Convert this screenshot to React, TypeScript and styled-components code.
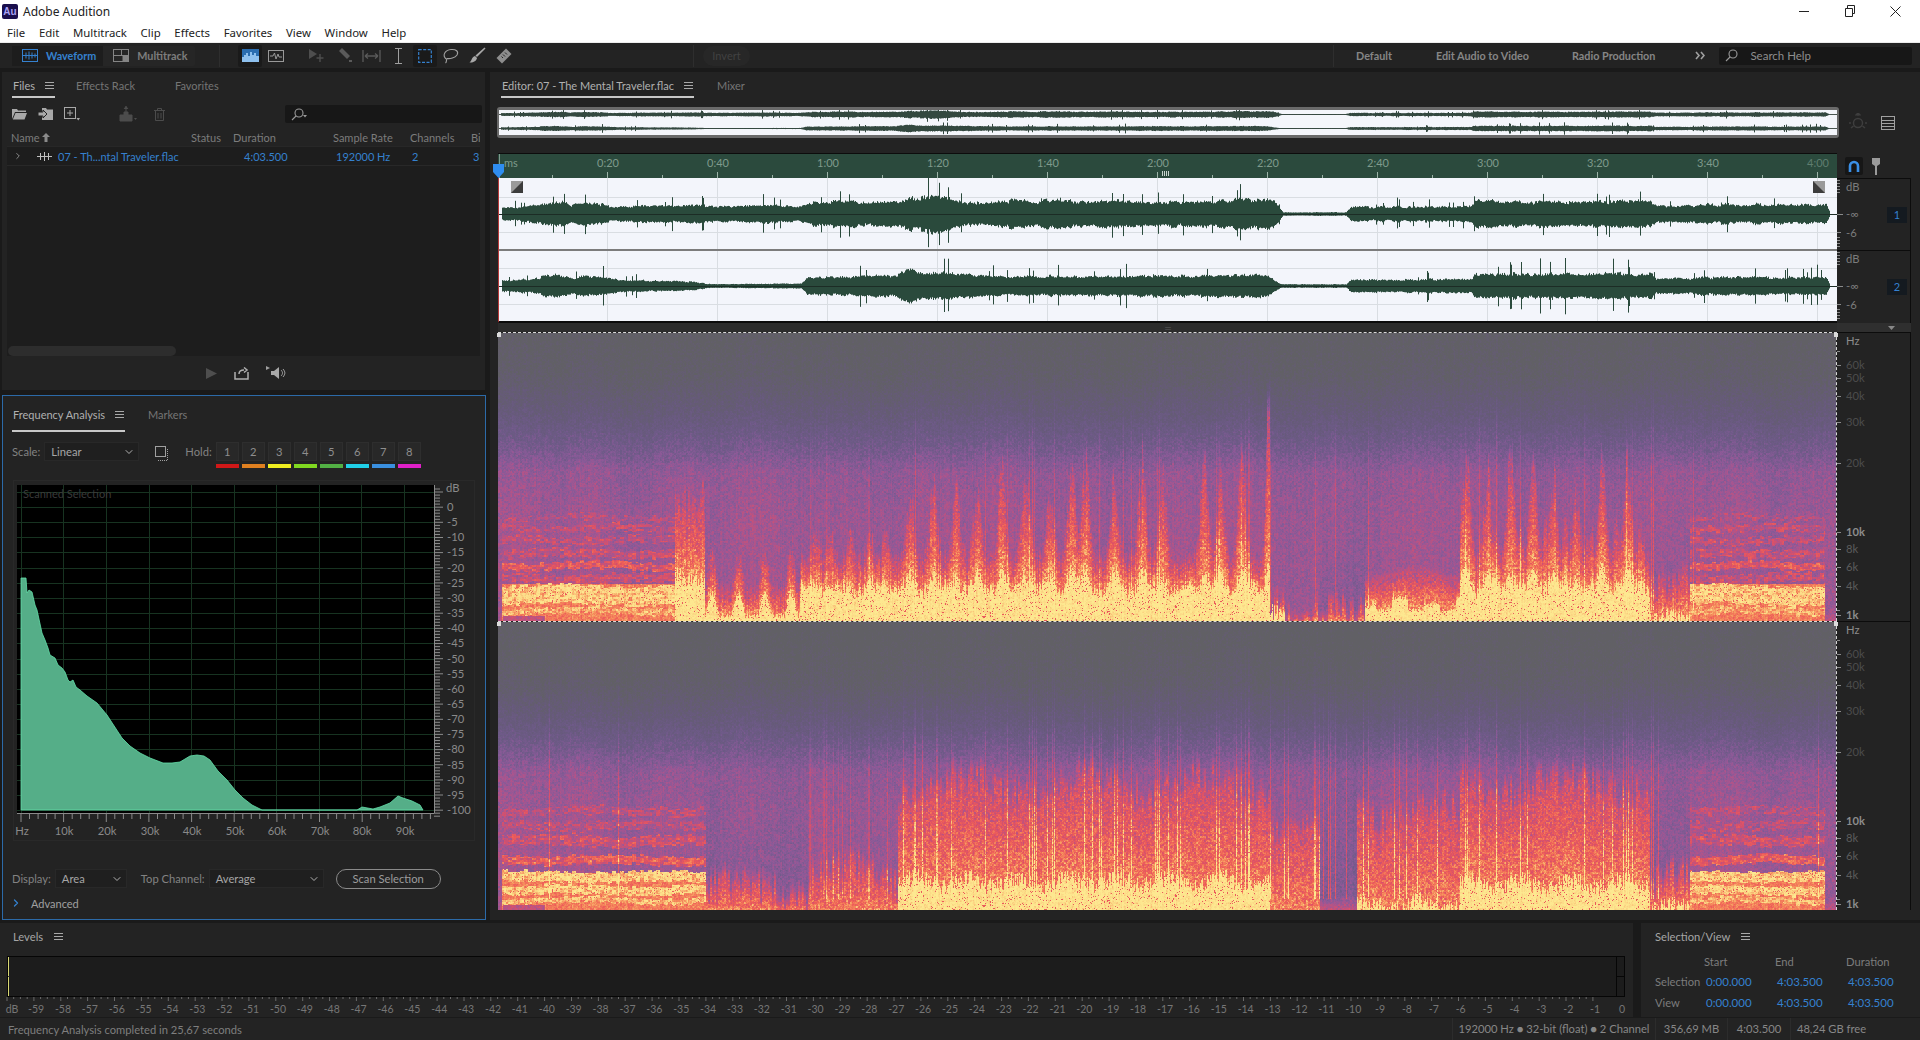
import React, { useEffect, useMemo, useRef } from "react";
import styled, { createGlobalStyle } from "styled-components";
import { ChevronDown, ChevronRight } from "lucide-react";

const GlobalStyle = createGlobalStyle`
  html, body {
    margin: 0;
    padding: 0;
    background: #1a1a1a;
  }
  * {
    box-sizing: border-box;
  }
`;

const UI_FONT = `Lato, "Liberation Sans", sans-serif`;
const WIN_FONT = `"Noto Sans", "Liberation Sans", sans-serif`;
const BLUE = "#3581cf";

const Page = styled.div`
  width: 1920px;
  height: 1040px;
  overflow: hidden;
  display: flex;
  flex-direction: column;
  background: #1a1a1a;
  font-family: ${UI_FONT};
  font-size: 11.2px;
  color: #9a9a9a;
`;

const TitleBar = styled.div`
  height: 22px;
  background: #fff;
  display: flex;
  align-items: center;
  padding-left: 2px;
  font-family: ${WIN_FONT};
  font-size: 12px;
  color: #222;
`;

const Logo = styled.div`
  width: 16px;
  height: 15px;
  background: #1a0f4d;
  border-radius: 2px;
  color: #a9a2f5;
  font-family: "Liberation Sans", sans-serif;
  font-weight: 700;
  font-size: 10px;
  line-height: 15px;
  text-align: center;
  margin-right: 5px;
`;

const WindowButtons = styled.div`
  margin-left: auto;
  display: flex;
  padding-right: 1px;
  color: #222;
`;

const WindowButton = styled.div`
  width: 45px;
  height: 22px;
  display: flex;
  align-items: center;
  justify-content: center;
  margin-right: 1px;
`;

const MenuBar = styled.div`
  height: 21px;
  background: #fff;
  display: flex;
  align-items: center;
  gap: 13.7px;
  padding-left: 7px;
  font-family: ${WIN_FONT};
  font-size: 11.4px;
  color: #222;
  border-bottom: 1px solid #ececec;
`;

const Toolbar = styled.div`
  height: 25px;
  background: #232323;
  display: flex;
  align-items: center;
  padding-left: 12px;
`;

const ModeSwitch = styled.div`
  width: 183px;
  height: 20px;
  background: #262626;
  border-radius: 2px;
  display: flex;
  align-items: center;
`;

const ModeButton = styled.div<{ $active?: boolean }>`
  height: 20px;
  display: flex;
  align-items: center;
  gap: 8px;
  padding: 0 7px 0 10px;
  font-weight: 700;
  font-size: 10.8px;
  background: ${(p) => (p.$active ? "#1d1d1d" : "transparent")};
  color: ${(p) => (p.$active ? BLUE : "#7d7d7d")};
`;

const ToolButton = styled.div<{ $ml?: number; $active?: boolean; $color?: string }>`
  width: 24px;
  height: 22px;
  margin-left: ${(p) => p.$ml ?? 0}px;
  display: flex;
  align-items: center;
  justify-content: center;
  border-radius: 2px;
  background: ${(p) => (p.$active ? "#1a1a1a" : "transparent")};
  color: ${(p) => p.$color ?? "#8c8c8c"};
`;

const ToolSep = styled.div<{ $ml: number }>`
  width: 1px;
  height: 22px;
  margin-left: ${(p) => p.$ml}px;
  background: #2e2e2e;
`;

const InvertPill = styled.div`
  width: 47px;
  height: 20px;
  margin-left: 9px;
  border-radius: 10px;
  background: #272727;
  color: #414141;
  text-align: center;
  font-size: 11px;
  line-height: 20px;
`;

const WorkspaceLink = styled.div<{ $ml: number }>`
  margin-left: ${(p) => p.$ml}px;
  color: #868686;
  font-weight: 700;
  font-size: 10.8px;
`;

const SearchBox = styled.div`
  width: 193px;
  height: 18px;
  margin-left: 14px;
  background: #171717;
  border-radius: 2px;
  display: flex;
  align-items: center;
  gap: 12px;
  padding-left: 6px;
  color: #8e8e8e;
  font-size: 11.5px;
`;

const ToolbarGap = styled.div`
  height: 4px;
  background: #1a1a1a;
`;

const Workspace = styled.div`
  height: 848px;
  display: flex;
`;

const LeftColumn = styled.div`
  width: 490px;
  padding: 0 4px 0 2px;
  display: flex;
  flex-direction: column;
  gap: 5px;
`;

const FilesPanel = styled.div`
  height: 318px;
  width: 483px;
  background: #232323;
  display: flex;
  flex-direction: column;
`;

const TabBar = styled.div<{ $pl: number }>`
  height: 28px;
  flex-shrink: 0;
  display: flex;
  padding-left: ${(p) => p.$pl}px;
`;

const Tab = styled.div<{ $active?: boolean; $mr?: number; $tall?: boolean }>`
  height: ${(p) => (p.$tall ? 36 : 26)}px;
  display: flex;
  align-items: center;
  gap: 10px;
  padding: 3px 1px 0;
  margin-right: ${(p) => p.$mr ?? 22}px;
  font-size: 11px;
  color: ${(p) => (p.$active ? "#b0b0b0" : "#757575")};
  border-bottom: 2px solid ${(p) => (p.$active ? "#c8c8c8" : "transparent")};
`;

const FileTools = styled.div`
  height: 28px;
  display: flex;
  align-items: center;
  padding-left: 5px;
`;

const FileSearch = styled.div`
  width: 197px;
  height: 18px;
  margin-left: 114px;
  background: #171717;
  border-radius: 2px;
  display: flex;
  align-items: center;
  padding-left: 6px;
  color: #999;
`;

const FileColumns = styled.div`
  display: grid;
  grid-template-columns: 184px 42px 100px 77px 61px 1fr;
  width: 473px;
  margin-left: 5px;
  align-items: center;
  overflow: hidden;
  white-space: nowrap;
`;

const HeaderRow = styled(FileColumns)`
  height: 18px;
  color: #7c7c7c;
  font-size: 11px;
  padding-top: 1px;
`;

const NameHead = styled.div`
  padding-left: 4px;
  display: flex;
  align-items: center;
  gap: 2px;
`;

const FileList = styled.div`
  width: 473px;
  margin-left: 5px;
  height: 210px;
  background: #1d1d1d;
  border-top: 1px solid #272727;
  position: relative;
`;

const FileRow = styled(FileColumns)`
  margin-left: 0;
  height: 19px;
  border-bottom: 1px solid #282828;
  color: ${BLUE};
  font-size: 11px;
`;

const FileName = styled.div`
  display: flex;
  align-items: center;
  padding-left: 6px;
  color: ${BLUE};
`;

const FileGlyph = styled.svg`
  margin: 0 6px 0 14px;
`;

const DurationCell = styled.div`
  padding-left: 11px;
`;

const SampleCell = styled.div`
  padding-left: 3px;
`;

const ChannelCell = styled.div`
  padding-left: 2px;
`;

const ScrollThumb = styled.div`
  position: absolute;
  left: 1px;
  bottom: 0;
  width: 168px;
  height: 10px;
  background: #2d2d2d;
  border-radius: 5px;
`;

const Transport = styled.div`
  flex: 1;
  display: flex;
  align-items: center;
  justify-content: center;
  gap: 17px;
  margin-left: 5px;
`;

const FreqPanel = styled.div`
  width: 484px;
  height: 525px;
  background: #232323;
  border: 1px solid #2c6aa8;
  display: flex;
  flex-direction: column;
`;

const ScaleRow = styled.div`
  height: 19px;
  margin-top: 18px;
  padding-left: 9px;
  display: flex;
  align-items: flex-start;
`;

const FieldLabel = styled.div<{ $ml?: number }>`
  margin-left: ${(p) => p.$ml ?? 0}px;
  height: 19px;
  line-height: 20px;
  color: #828282;
  font-size: 11.2px;
  white-space: nowrap;
`;

const Select = styled.div<{ $w: number; $ml?: number }>`
  width: ${(p) => p.$w}px;
  height: 19px;
  margin-left: ${(p) => p.$ml ?? 4}px;
  padding: 0 3px 0 6px;
  display: flex;
  align-items: center;
  justify-content: space-between;
  background: #1f1f1f;
  border: 1px solid #282828;
  color: #a6a6a6;
  font-size: 11.2px;
`;

const HoldGroup = styled.div`
  display: flex;
  gap: 3px;
  margin-left: 4px;
`;

const HoldSlot = styled.div`
  width: 23px;
  display: flex;
  flex-direction: column;
  gap: 3px;
`;

const HoldButton = styled.div`
  height: 19px;
  background: #282828;
  border: 1px solid #2e2e2e;
  color: #8e8e8e;
  text-align: center;
  line-height: 17px;
  font-size: 11.2px;
`;

const HoldColor = styled.div<{ $c: string }>`
  height: 4px;
  background: ${(p) => p.$c};
`;

const ChartFrame = styled.div`
  width: 462px;
  height: 361px;
  margin: 19px 0 0 10px;
  border: 1px solid #292929;
`;

const ChartSvg = styled.svg`
  display: block;
`;

const DisplayRow = styled.div`
  margin-top: 28px;
  height: 19px;
  padding-left: 9px;
  display: flex;
`;

const ScanButton = styled.div`
  width: 105px;
  height: 20px;
  margin-left: 12px;
  border: 1px solid #8a8a8a;
  border-radius: 10px;
  text-align: center;
  line-height: 17px;
  color: #9c9c9c;
  font-size: 11.2px;
`;

const AdvancedRow = styled.div`
  margin-top: 6px;
  height: 18px;
  padding-left: 7px;
  display: flex;
  align-items: center;
  gap: 9px;
  color: #a0a0a0;
  font-size: 11px;
`;

const EditorPanel = styled.div`
  flex: 1;
  background: #232323;
  padding-left: 8px;
  height: 848px;
`;

const OverviewRow = styled.div`
  height: 46px;
  margin-top: 7px;
  display: flex;
  align-items: flex-start;
`;

const OverviewFrame = styled.div`
  width: 1342px;
  height: 31px;
  margin-left: -1px;
  background: #f4f6fb;
  border: solid #6a6a6a;
  border-width: 3px 2px;
  border-radius: 3px;
`;

const OverviewTools = styled.div`
  height: 31px;
  display: flex;
  align-items: center;
  gap: 13px;
  padding-left: 9px;
`;

const TrackGrid = styled.div`
  display: grid;
  grid-template-columns: 1339px 74px;
`;

const RulerCell = styled.div`
  height: 25px;
  border-top: 1px solid #0c0c0c;
  position: relative;
`;

const RulerSvg = styled.svg`
  display: block;
  background: #2b4a3d;
`;

const Playhead = styled.svg`
  position: absolute;
  left: -5px;
  top: 10px;
`;

const RulerTools = styled.div`
  display: flex;
  align-items: center;
  gap: 9px;
  padding: 1px 0 0 8px;
`;

const MagnetButton = styled.div`
  width: 18px;
  height: 18px;
  background: #161616;
  border-radius: 2px;
  display: flex;
  align-items: center;
  justify-content: center;
`;

const WaveCell = styled.div`
  height: 145px;
  position: relative;
  background: #f3f5fb;
  border-left: 1px solid #b83a3a;
  border-bottom: 2px solid #0c0c0c;
`;

const WaveSvg = styled.svg`
  display: block;
`;

const FadeHandle = styled.svg<{ $side: "left" | "right" }>`
  position: absolute;
  top: 3px;
  ${(p) => (p.$side === "left" ? "left: 12px;" : "right: 12px;")}
`;

const AxisCell = styled.div`
  position: relative;
  border-top: 1px solid #0c0c0c;
  border-right: 1px solid #0c0c0c;
`;

const ChannelBadge = styled.div<{ $top: number }>`
  position: absolute;
  right: 3px;
  top: ${(p) => p.$top}px;
  width: 20px;
  height: 16px;
  background: #141a20;
  color: ${BLUE};
  text-align: center;
  line-height: 16px;
  font-size: 11px;
`;

const SplitStrip = styled.div`
  height: 9px;
  background: #2c2c2c;
  display: flex;
  align-items: center;
  justify-content: center;
  color: #555;
  font-size: 6px;
  letter-spacing: -1px;
`;

const StripEnd = styled.div`
  height: 9px;
  background: #2f2f2f;
  display: flex;
  align-items: center;
  justify-content: flex-end;
  padding-right: 16px;
`;

const SpecPane = styled.div`
  height: 289px;
  position: relative;
  border-top: 1px dashed #d8d8d8;
  border-right: 1px dashed #d8d8d8;
`;

const SpecCanvas = styled.canvas`
  display: block;
`;

const Handle = styled.div<{ $right?: boolean }>`
  position: absolute;
  top: 0;
  ${(p) => (p.$right ? "right: -2px;" : "left: -1px;")}
  width: 4px;
  height: 4px;
  background: #dcdcdc;
`;

const SpecAxis = styled.div`
  border-top: 1px solid #0c0c0c;
  border-right: 1px solid #0c0c0c;
`;

const BottomRow = styled.div`
  height: 94px;
  margin-top: 3px;
  display: flex;
  gap: 8px;
`;

const LevelsPanel = styled.div`
  width: 1633px;
  background: #232323;
`;

const PanelHead = styled.div<{ $pl: number }>`
  height: 33px;
  padding: 0 0 6px ${(p) => p.$pl}px;
  display: flex;
  align-items: center;
  gap: 11px;
  color: #a6a6a6;
  font-size: 11.2px;
`;

const SelectionPanel = styled.div`
  flex: 1;
  background: #232323;
`;

const SelectionTable = styled.div`
  display: grid;
  grid-template-columns: 51px 71px 71px 1fr;
  grid-auto-rows: 20.5px;
  padding-left: 14px;
  margin-top: -5px;
  align-items: center;
  font-size: 11.2px;
  color: #7c7c7c;
`;

const SelValue = styled.div`
  color: ${BLUE};
  font-size: 11.5px;
`;

const SelHead = styled.div`
  margin-left: -2px;
`;

const StatusBar = styled.div`
  height: 22px;
  background: #232323;
  margin-top: 1px;
  display: flex;
  align-items: center;
  padding-left: 8px;
  color: #7e7e7e;
  font-size: 11.2px;
`;

const StatusCell = styled.div<{ $w: number }>`
  width: ${(p) => p.$w}px;
  text-align: center;
  border-left: 1px solid #2c2c2c;
  height: 22px;
  line-height: 22px;
  color: #878787;
  white-space: nowrap;
`;

const StatusCells = styled.div`
  margin-left: auto;
  display: flex;
  margin-right: 48px;
`;

// helpers --------------------------------------------------------------
const hash = (x: number, y: number) => {
  const n = Math.sin(x * 127.1 + y * 311.7) * 43758.5453;
  return n - Math.floor(n);
};

const pw = (pts: number[][], x: number) => {
  if (x <= pts[0][0]) return pts[0][1];
  for (let i = 1; i < pts.length; i++) {
    if (x <= pts[i][0]) {
      const t = (x - pts[i - 1][0]) / (pts[i][0] - pts[i - 1][0]);
      return pts[i - 1][1] + (pts[i][1] - pts[i - 1][1]) * t;
    }
  }
  return pts[pts.length - 1][1];
};

// waveform envelopes, x in page pixels, half height in pixels
const ENV = [
  [[501, 7], [530, 9], [555, 15], [570, 10], [583, 16], [610, 8], [650, 10], [700, 10], [730, 9], [760, 10], [800, 9], [815, 15], [900, 15], [930, 22], [980, 12], [1000, 16], [1100, 16], [1180, 14], [1250, 18], [1272, 17], [1282, 2], [1345, 2], [1350, 8], [1470, 9], [1475, 15], [1650, 15], [1655, 10], [1690, 10], [1695, 11], [1825, 11], [1829, 1]],
  [[501, 6], [530, 8], [555, 14], [570, 9], [583, 12], [620, 7], [690, 5], [710, 2], [800, 3], [806, 10], [895, 12], [900, 18], [960, 14], [1000, 11], [1200, 12], [1265, 13], [1280, 2], [1345, 2], [1350, 7], [1470, 8], [1475, 14], [1650, 14], [1655, 9], [1690, 9], [1695, 10], [1825, 10], [1829, 1]],
];

const wavePath = (ch: number, cy: number, scale: number, x0: number) => {
  let d = "";
  for (let x = 501; x < 1829; x++) {
    const a = pw(ENV[ch], x);
    const r = hash(x, ch + 1);
    const spike = r > 0.965 && a > 6 ? 1.5 + hash(x, 9) * (ch === 1 ? 0.9 : 0.45) : 1;
    // uneven lumps so the outline is not a flat band
    const lump = ch === 0 ? 0.74 + hash(x >> 3, 31) * 0.2 + hash(x >> 1, 33) * 0.12 : 0.82 + hash(x >> 2, 35) * 0.2;
    const up = a * lump * (0.82 + hash(x, 3 + ch) * 0.18) * spike * scale;
    const dn = a * lump * (0.82 + hash(x, 5 + ch) * 0.18) * spike * scale;
    d += `M${x - x0 + 0.5} ${(cy - up).toFixed(1)}V${(cy + dn).toFixed(1)}`;
  }
  return d;
};

// spectrogram model --------------------------------------------------
const PALETTE: [number, number, number, number][] = [
  [0, 0x61, 0x60, 0x65],
  [0.18, 0x66, 0x5a, 0x7a],
  [0.3, 0x6e, 0x5a, 0x88],
  [0.42, 0x8a, 0x5a, 0x98],
  [0.5, 0xa8, 0x55, 0x8f],
  [0.62, 0xd8, 0x50, 0x6a],
  [0.72, 0xee, 0x5e, 0x58],
  [0.82, 0xf5, 0x8e, 0x5c],
  [0.92, 0xfb, 0xd6, 0x84],
  [1, 0xfd, 0xe8, 0x90],
];

const paletteAt = (e: number) => {
  const v = Math.max(0, Math.min(1, e));
  for (let i = 1; i < PALETTE.length; i++) {
    if (v <= PALETTE[i][0]) {
      const a = PALETTE[i - 1];
      const b = PALETTE[i];
      const t = (v - a[0]) / (b[0] - a[0]);
      return [a[1] + (b[1] - a[1]) * t, a[2] + (b[2] - a[2]) * t, a[3] + (b[3] - a[3]) * t];
    }
  }
  return [0xfd, 0xe8, 0x90];
};

type Seg = { to: number; hc: number; hr: number; kind?: "stripe" | "flame" | "dark" | "low" | "bumps" };

const SEGS: Seg[][] = [
  [
    { to: 502, hc: 0, hr: 0 },
    { to: 675, hc: 0, hr: 0, kind: "stripe" },
    { to: 705, hc: 0.16, hr: 0.44 },
    { to: 800, hc: 0.02, hr: 0.1, kind: "bumps" },
    { to: 1270, hc: 0.11, hr: 0.2, kind: "flame" },
    { to: 1285, hc: 0.02, hr: 0.08 },
    { to: 1320, hc: 0, hr: 0.02 },
    { to: 1365, hc: 0, hr: 0.01, kind: "dark" },
    { to: 1460, hc: 0.07, hr: 0.15, kind: "low" },
    { to: 1650, hc: 0.11, hr: 0.2, kind: "flame" },
    { to: 1690, hc: 0.01, hr: 0.14, kind: "dark" },
    { to: 1825, hc: 0, hr: 0, kind: "stripe" },
    { to: 1840, hc: 0, hr: 0 },
  ],
  [
    { to: 502, hc: 0, hr: 0 },
    { to: 706, hc: 0, hr: 0, kind: "stripe" },
    { to: 808, hc: 0, hr: 0.07, kind: "dark" },
    { to: 898, hc: 0, hr: 0.12 },
    { to: 1270, hc: 0.1, hr: 0.42 },
    { to: 1320, hc: 0, hr: 0.28 },
    { to: 1357, hc: 0, hr: 0, kind: "dark" },
    { to: 1460, hc: 0.02, hr: 0.33 },
    { to: 1650, hc: 0.09, hr: 0.42 },
    { to: 1690, hc: 0.01, hr: 0.1, kind: "dark" },
    { to: 1825, hc: 0, hr: 0, kind: "stripe" },
    { to: 1840, hc: 0, hr: 0 },
  ],
];

const BANDS: number[][][] = [
  [[0.025, 0.05, 0.93], [0.06, 0.125, 0.98], [0.135, 0.165, 0.68], [0.18, 0.205, 0.76], [0.22, 0.25, 0.68], [0.27, 0.295, 0.66], [0.31, 0.335, 0.66], [0.35, 0.37, 0.62]],
  [[0.025, 0.045, 0.95], [0.055, 0.085, 0.98], [0.1, 0.135, 0.98], [0.16, 0.19, 0.78], [0.225, 0.26, 0.7], [0.28, 0.31, 0.64], [0.33, 0.36, 0.64]],
];

const PEAKS = [678, 692, 910, 933, 956, 977, 1002, 1025, 1050, 1071, 1085, 1114, 1142, 1162, 1204, 1220, 1241, 1466, 1487, 1510, 1533, 1553, 1576, 1602, 1627];
const SMALL_PEAKS = [815, 830, 850, 870, 885, 1495, 1520, 1545, 1565, 1590, 1615, 1640];

const peakAt = (x: number) => {
  let v = 0;
  for (const p of PEAKS) {
    const dx = (x - p) / 5.5;
    v = Math.max(v, Math.exp(-dx * dx) * (0.18 + hash(p, 2) * 0.15));
  }
  for (const p of SMALL_PEAKS) {
    const dx = (x - p) / 4;
    v = Math.max(v, Math.exp(-dx * dx) * 0.11);
  }
  const dx = (x - 1269) / 4.5;
  return Math.max(v, Math.exp(-dx * dx) * 0.5);
};

const BASE = [[0, 0.47], [0.35, 0.47], [0.52, 0.44], [0.62, 0.31], [0.72, 0.18], [0.85, 0.05], [1, 0]];

const energyAt = (ch: number, x: number, y: number, d: number) => {
  const seg = SEGS[ch].find((s) => x < s.to) ?? SEGS[ch][0];
  let base = pw(BASE, ch === 1 ? d * 1.08 : d);
  base += (Math.sin(x / 37) + Math.sin(x / 13 + ch)) * 0.012;
  if (seg.kind === "dark") base -= ch === 0 ? 0.05 * Math.max(0, 1 - d / 0.45) : 0.08 * Math.max(0, 1 - d / 0.65);
  let e = base;
  const colA = hash(x, 11 + ch);
  const colB = hash(x >> 1, 23 + ch);
  let inRed = false;
  if (seg.kind === "stripe") {
    for (const b of BANDS[ch]) {
      const wob = Math.sin(x / 23 + b[0] * 40) * 0.005 + (hash(x >> 2, b[0] * 31) - 0.5) * 0.012;
      if (d >= b[0] + wob && d <= b[1] + wob) {
        const drop = b[2] > 0.9 ? 0.14 : 0.22;
        e = Math.max(e, b[2] - hash(x >> 2, (y >> 1) + 3) * drop);
      }
    }
    if (d < 0.02 && x < 545 && x > 502) e = 0.56;
    else if (d < 0.13 && e < 0.6) e = 0.78;
  } else {
    let hc = seg.hc;
    let hr = seg.hr;
    if (seg.kind === "flame") {
      const p = peakAt(x);
      hr += p * (0.75 + colB * 0.5);
      hc += p * 0.2;
      hc += Math.sin(x / 5.5) * 0.012 + (colA - 0.5) * 0.05;
      hr += (colA - 0.5) * 0.05;
    } else if (seg.kind === "bumps") {
      const s = Math.max(0, Math.sin((x - 705) / 4.2));
      hc += s * 0.075 + (colA - 0.5) * 0.02;
      hr += s * 0.12 + (colA - 0.5) * 0.03;
    } else if (seg.kind === "low") {
      // cream blocks that step and break up, as in the quiet passage
      hc += Math.sin(x / 11) * 0.015 + (colA - 0.5) * 0.02;
      hr += Math.sin(x / 17) * 0.02;
      if (hash(x >> 4, 41) > 0.5) hc *= 0.55;
    } else if (hr > 0) {
      hc += hc > 0 ? (colA - 0.5) * 0.06 + Math.sin(x / 8) * 0.015 : 0;
      hr += (colB - 0.5) * 0.11 + Math.sin(x / 19 + ch) * 0.03;
    }
    hc = Math.max(0, hc);
    hr = Math.max(0, hr);
    if (d < hc) {
      e = 0.97;
    } else if (d < hr) {
      const t = (d - hc) / Math.max(0.001, hr - hc);
      e = ch === 1 ? 0.79 - 0.2 * t : 0.84 - 0.3 * t;
      inRed = true;
    } else {
      e = Math.max(base, 0.58 - (d - hr) * 3.6);
    }
  }
  // thin bright lines running up from the loud parts
  const lineP = ch === 1 ? (x > 790 && x < 1660 ? 0.9 : 0.995) : x > 800 && x < 1700 ? 0.965 : 0.998;
  if (hash(x, 7) > lineP && d > 0.04 && d < 0.9) {
    const boost = (ch === 1 ? 0.28 : 0.2) * (1 - d);
    e = x < 898 && x > 808 ? e + boost * 0.55 : e + boost;
  }
  const fine = hash(x >> 1, y >> 1) * 0.6 + hash(x, y) * 0.4;
  e += (fine - 0.5) * (inRed ? 0.3 : 0.17);
  e += (hash(x, 17) - 0.5) * 0.04;
  if (e > 0.88 && hash(x + 3, y + 5) < 0.06) e = 0.7;
  return e;
};

// drawings ------------------------------------------------------------
const Spectrogram = ({ channel }: { channel: number }) => {
  const ref = useRef<HTMLCanvasElement>(null);
  useEffect(() => {
    const c = ref.current;
    const ctx = c?.getContext("2d");
    if (!c || !ctx) return;
    const img = ctx.createImageData(c.width, c.height);
    for (let y = 0; y < c.height; y++) {
      const d = 1 - y / c.height;
      for (let x = 0; x < c.width; x++) {
        const [r, g, b] = paletteAt(energyAt(channel, x + 498, y, d));
        const i = (y * c.width + x) * 4;
        img.data[i] = r;
        img.data[i + 1] = g;
        img.data[i + 2] = b;
        img.data[i + 3] = 255;
      }
    }
    ctx.putImageData(img, 0, 0);
  }, [channel]);
  return <SpecCanvas ref={ref} width={1338} height={288} />;
};

const Lines = () => (
  <svg width="9" height="9" viewBox="0 0 9 9" stroke="#a8a8a8" strokeWidth="1">
    <path d="M0 1.500H9M0 4.500H9M0 7.500H9" />
  </svg>
);

const WaveGlyph = ({ color }: { color: string }) => (
  <svg width="16" height="13" viewBox="0 0 16 13" fill="none" stroke={color}>
    <rect x=".5" y=".5" width="15" height="12" />
    <path d="M.5 6.500H15.500M4 3.500V9.500M7 2.500V10.500M10 3.500V9.500M13 4.500V8.500" />
  </svg>
);

const MultiGlyph = () => (
  <svg width="16" height="13" viewBox="0 0 16 13" fill="none" stroke="#858585">
    <rect x=".5" y=".5" width="15" height="12" />
    <path d="M.5 6.500H15.500M8.500 .5V6.500" />
    <path d="M10 7h5.500v5.500H10z" fill="#858585" />
  </svg>
);

const ToolbarIcons = () => (
  <>
    <ToolSep $ml={24} />
    <ToolButton $ml={18} $active $color={BLUE}>
      <svg width="17" height="13" viewBox="0 0 17 13">
        <rect width="17" height="13" fill="#2a6db0" />
        <path d="M0 8H2V6H4V4H6V7H8V3H10V6H12V4H14V7H17V13H0Z" fill="#8ec0ee" />
      </svg>
    </ToolButton>
    <ToolButton $ml={2}>
      <svg width="16" height="12" viewBox="0 0 16 12" fill="none" stroke="#999">
        <rect x=".5" y=".5" width="15" height="11" />
        <path d="M2 6H5L6.500 3L8 9L10 4L11 7H14" />
      </svg>
    </ToolButton>
    <ToolButton $ml={17} $color="#4e4e4e">
      <svg width="18" height="15" viewBox="0 0 18 15" fill="currentColor">
        <path d="M1 1L9 6L1 11Z" />
        <path d="M12 6V14M8.500 10H15.500" stroke="currentColor" strokeWidth="1.400" />
      </svg>
    </ToolButton>
    <ToolButton $ml={4} $color="#5a5a5a">
      <svg width="16" height="17" viewBox="0 0 16 17" fill="currentColor">
        <path d="M5 1L13 9L10 12L2 4Z" />
        <path d="M12 13H15V15H12Z" />
      </svg>
    </ToolButton>
    <ToolButton $ml={2} $color="#5a5a5a">
      <svg width="19" height="14" viewBox="0 0 19 14" fill="none" stroke="currentColor" strokeWidth="1.300">
        <path d="M1 1V13M18 1V13M3 7H16M3 7L6 4.500M3 7L6 9.500M16 7L13 4.500M16 7L13 9.500" />
      </svg>
    </ToolButton>
    <ToolButton $ml={3}>
      <svg width="9" height="16" viewBox="0 0 9 16" fill="none" stroke="#a0a0a0">
        <path d="M1 .5H8M4.500 .5V15.500M1 15.500H8" />
      </svg>
    </ToolButton>
    <ToolButton $ml={3} $active $color={BLUE}>
      <svg width="14" height="14" viewBox="0 0 14 14" fill="none" stroke={BLUE} strokeWidth="1.200" strokeDasharray="3 1.500">
        <rect x=".7" y=".7" width="12.600" height="12.600" />
      </svg>
    </ToolButton>
    <ToolButton $ml={2}>
      <svg width="18" height="16" viewBox="0 0 18 16" fill="none" stroke="#a0a0a0" strokeWidth="1.100">
        <path d="M4 11C0 7 3 2 9 1.500C14 1 17 3.500 15 7C13 10 8 11 5 10.500C4 12 5 14 3.500 15" />
      </svg>
    </ToolButton>
    <ToolButton $ml={2}>
      <svg width="17" height="17" viewBox="0 0 17 17" fill="#a8a8a8">
        <path d="M15.500 .5L16.500 1.500L8 10L6.500 8.500Z" />
        <path d="M6 9L8 11C7.500 14 4 16 .5 15.500C3 14 2.500 10 6 9Z" />
      </svg>
    </ToolButton>
    <ToolButton $ml={3}>
      <svg width="18" height="17" viewBox="0 0 18 17" fill="#8d8d8d">
        <path d="M11 1.500L16.500 7L7 16.500L1.500 11Z" />
        <path d="M8 7.500L10 9.500M6.500 9.500L8 11M10 5.500L12 7.500" stroke="#222" />
      </svg>
    </ToolButton>
  </>
);

const SearchGlyph = ({ caret }: { caret?: boolean }) => (
  <svg width={caret ? 16 : 13} height="13" viewBox={caret ? "0 0 16 13" : "0 0 13 13"} fill="none" stroke="#9a9a9a" strokeWidth="1.100">
    <circle cx="8" cy="5" r="4" />
    <path d="M5 8L1 12" />
    {caret ? <path d="M12 7H16L14 9.500Z" fill="#9a9a9a" stroke="none" /> : null}
  </svg>
);

const FileToolIcons = () => (
  <>
    <ToolButton>
      <svg width="15" height="12" viewBox="0 0 15 12" fill="#a8a8a8">
        <path d="M0 1H5L6 2.500H14V4H3L0 11ZM3.500 5H15L12.500 11.500H.8Z" />
      </svg>
    </ToolButton>
    <ToolButton $ml={3}>
      <svg width="16" height="14" viewBox="0 0 16 14" fill="#a8a8a8">
        <path d="M4 1H8L9 2.500H15V13H4Z" />
        <path d="M0 5H5V3L9 7L5 11V9H0Z" stroke="#232323" />
      </svg>
    </ToolButton>
    <ToolButton $ml={2}>
      <svg width="17" height="15" viewBox="0 0 17 15" fill="none" stroke="#a8a8a8">
        <rect x=".5" y=".5" width="11" height="11" />
        <path d="M3 6H9M6 3V9" />
        <path d="M12.500 11H16L14.250 13.500Z" fill="#a8a8a8" stroke="none" />
      </svg>
    </ToolButton>
    <ToolButton $ml={32} $color="#4c4c4c">
      <svg width="18" height="16" viewBox="0 0 18 16" fill="currentColor">
        <path d="M1 9H5V6H9V9H13V15H1ZM7 0V6M5 3L7 .5L9 3" stroke="currentColor" />
        <path d="M15 12H18L16.500 14Z" />
      </svg>
    </ToolButton>
    <ToolButton $ml={7} $color="#4c4c4c">
      <svg width="11" height="13" viewBox="0 0 11 13" fill="none" stroke="currentColor">
        <path d="M0 2.500H11M3.500 2.500V.5H7.500V2.500M1.500 2.500V12.500H9.500V2.500M4 5V10.500M7 5V10.500" />
      </svg>
    </ToolButton>
  </>
);

const FREQ_AREA = [[21, 810], [21, 578], [26, 578], [27, 593], [29, 590], [32, 592], [35, 605], [37, 610], [42, 633], [45, 640], [48, 648], [50, 655], [55, 658], [58, 665], [62, 668], [65, 672], [68, 680], [70, 682], [73, 680], [76, 687], [80, 690], [87, 696], [97, 703], [107, 715], [122, 738], [130, 746], [140, 753], [150, 758], [163, 763], [172, 763], [180, 762], [190, 756], [197, 755], [204, 756], [210, 760], [218, 771], [227, 780], [235, 790], [243, 798], [252, 805], [262, 810], [357, 810], [362, 807], [373, 809], [380, 807], [390, 803], [398, 796], [403, 798], [412, 801], [420, 805], [423, 810]];
const FREQ_X = [21, 63, 106, 149, 191, 234, 276, 319, 361, 404];
const DB_LABELS = ["0", "-5", "-10", "-15", "-20", "-25", "-30", "-35", "-40", "-45", "-50", "-55", "-60", "-65", "-70", "-75", "-80", "-85", "-90", "-95", "-100"];

const FrequencyChart = () => {
  const ticksX = [];
  for (let i = 0; i <= 48; i++) ticksX.push(21 + i * 8.53);
  const ticksY = [];
  for (let i = 0; i <= 108; i++) ticksY.push(489 + i * 3.03);
  const areaD = FREQ_AREA.map((p, i) => `${i ? "L" : "M"}${p[0]} ${p[1]}`).join("") + "Z";
  return (
    <ChartSvg width="460" height="359" viewBox="14 481 460 359">
      <rect x="17" y="485" width="417" height="328" fill="#000" />
      <g stroke="#173321" strokeWidth="1">
        {FREQ_X.map((x) => (
          <path key={x} d={`M${x + 0.5} 485V813`} />
        ))}
        {DB_LABELS.map((_, i) => (
          <path key={i} d={`M17 ${Math.round(507 + i * 15.15) + 0.5}H434`} />
        ))}
        <path d="M17 492.500H434" />
      </g>
      <path d={areaD} fill="#55ae88" />
      <path d={areaD} fill="none" stroke="#62dfa9" strokeWidth="0.800" />
      <path d="M17 813.500H434M434.500 485V813" stroke="#8a8a8a" />
      <g stroke="#8a8a8a">
        {ticksX.map((x, i) => (
          <path key={i} d={`M${x.toFixed(1)} 813V${i % 5 === 0 ? 822 : 819}`} />
        ))}
        {ticksY.map((y, i) => {
          const major = (i - 6) % 5 === 0;
          return <path key={i} d={`M434 ${y.toFixed(1)}H${major ? 443 : 440}`} />;
        })}
      </g>
      <text x="23" y="498" fill="#3a3a3a" fontSize="11">Scanned Selection</text>
      <g fill="#8a8a8a" fontSize="11.200">
        <text x="446" y="492">dB</text>
        {DB_LABELS.map((l, i) => (
          <text key={l} x="447" y={511 + i * 15.15}>
            {l}
          </text>
        ))}
        {["Hz", "10k", "20k", "30k", "40k", "50k", "60k", "70k", "80k", "90k"].map((l, i) => (
          <text key={l} x={FREQ_X[i] + 1} y="835" textAnchor="middle">
            {l}
          </text>
        ))}
      </g>
    </ChartSvg>
  );
};

const Ruler = () => {
  const labels = ["0:20", "0:40", "1:00", "1:20", "1:40", "2:00", "2:20", "2:40", "3:00", "3:20", "3:40", "4:00"];
  return (
    <RulerCell>
      <RulerSvg width="1339" height="24" viewBox="0 0 1339 24">
        <text x="6" y="13" fontSize="11" fill="#7f9a8c">ms</text>
        {labels.map((l, i) => (
          <g key={l}>
            <text x={110 * (i + 1)} y="13" fontSize="11" fill={i === 11 ? "#5f7d6f" : "#7f9a8c"} textAnchor="middle">
              {l}
            </text>
            <path d={`M${110 * (i + 1) - 0.5} 18V24`} stroke="#9db3a8" />
            <path d={`M${110 * (i + 1) - 55.5} 21V24`} stroke="#9db3a8" />
          </g>
        ))}
        <path d="M1.500 0V24" stroke="#7e9a8d" />
        <path d="M664.500 17V22M666.500 17V22M668.500 17V22M670.500 17V22" stroke="#c8d4ce" />
      </RulerSvg>
      <Playhead width="11" height="14" viewBox="0 0 11 14">
        <path d="M0 0H11V8L5.500 14L0 8Z" fill="#2f8df0" />
      </Playhead>
    </RulerCell>
  );
};

const WaveView = () => {
  const top = useMemo(() => wavePath(0, 36, 1, 498), []);
  const bottom = useMemo(() => wavePath(1, 108, 1, 498), []);
  const grid = [];
  for (let i = 1; i <= 12; i++) grid.push(110 * i - 1);
  return (
    <WaveSvg width="1338" height="143" viewBox="0 0 1338 143">
      <g stroke="#d9dde2">
        <path d="M0 19.500H1338M0 54.500H1338M0 90.500H1338M0 126.500H1338" />
        {grid.map((x) => (
          <path key={x} d={`M${x - 0.5} 0V143`} />
        ))}
      </g>
      <path d="M0 72H1338" stroke="#7c7c7c" strokeWidth="2" />
      <path d={top} stroke="#2a4a3c" strokeWidth="1" />
      <path d={bottom} stroke="#2a4a3c" strokeWidth="1" />
      <path d="M0 36.500H1338M0 108.500H1338" stroke="#1c2c25" strokeWidth="1" />
    </WaveSvg>
  );
};

const FadeGlyph = ({ side }: { side: "left" | "right" }) => (
  <FadeHandle $side={side} width="12" height="12" viewBox="0 0 12 12">
    <rect width="12" height="12" fill="#9a9a9a" />
    <path d={side === "left" ? "M12 0V12H0Z" : "M0 0V12H12Z"} fill="#3c3c3c" />
  </FadeHandle>
);

const Overview = () => {
  const top = useMemo(() => wavePath(0, 4.5, 0.22, 499), []);
  const bottom = useMemo(() => wavePath(1, 18.5, 0.22, 499), []);
  return (
    <WaveSvg width="1338" height="25" viewBox="0 0 1338 25">
      <path d="M0 4.500H1338M0 18.500H1338" stroke="#4a5650" />
      <path d={top} stroke="#33483f" />
      <path d={bottom} stroke="#33483f" />
    </WaveSvg>
  );
};

const DbAxis = () => (
  <WaveSvg width="73" height="144" viewBox="0 0 73 144">
    <path d="M0 71.500H73" stroke="#0c0c0c" />
    {[0, 72].map((o) => (
      <g key={o}>
        <text x="9" y={12 + o} fontSize="11.200" fill="#7c7c7c">dB</text>
        <text x="9" y={39 + o} fontSize="11.200" fill="#7c7c7c">-∞</text>
        <text x="9" y={58 + o} fontSize="11.200" fill="#7c7c7c">-6</text>
        <path
          d={`M0 ${35.5 + o}H6M0 ${53.5 + o}H4M0 ${1.5 + o}H3M0 ${4.5 + o}H3M0 ${7.5 + o}H3M0 ${10.5 + o}H3M0 ${13.5 + o}H3M0 ${58.5 + o}H3M0 ${61.5 + o}H3M0 ${64.5 + o}H3M0 ${67.5 + o}H3`}
          stroke="#8a8a8a"
        />
      </g>
    ))}
  </WaveSvg>
);

const HZ = [["Hz", 8], ["60k", 32], ["50k", 45], ["40k", 63], ["30k", 89], ["20k", 130], ["10k", 199], ["8k", 216], ["6k", 234], ["4k", 253], ["1k", 282]] as const;

const HzAxis = () => (
  <WaveSvg width="72" height="288" viewBox="0 0 72 288">
    {HZ.map(([l, y]) => (
      <g key={l}>
        <text
          x="9"
          y={y + 4}
          fontSize="11.200"
          fontWeight={l === "10k" || l === "1k" ? 700 : 400}
          fill={l === "Hz" || l === "10k" || l === "1k" ? "#8c8c8c" : l.length === 2 ? "#5c5c5c" : "#4c4c4c"}
        >
          {l}
        </text>
        {l === "Hz" ? null : <path d={`M0 ${y + 0.5}H4`} stroke="#8a8a8a" />}
      </g>
    ))}
    <path d="M0 18.500H3M0 277.500H3" stroke="#8a8a8a" />
  </WaveSvg>
);

const LevelsMeter = () => {
  const labels = [];
  for (let i = -59; i <= 0; i++) labels.push(i);
  const ticks = [];
  for (let i = 0; i <= 236; i++) ticks.push(7 + i * 6.72);
  return (
    <WaveSvg width="1633" height="61" viewBox="0 0 1633 61">
      <rect x="7.500" y=".5" width="1617" height="40" fill="#1c1c1c" stroke="#060606" />
      <path d="M8.500 1V40" stroke="#d8d874" />
      <path d="M1616.500 1V40M1616.500 20.500H1625" stroke="#060606" />
      <path d="M8 20.500H9.500" stroke="#333" />
      <g stroke="#6a6a6a">
        {ticks.map((x, i) => (
          <path key={i} d={`M${x.toFixed(1)} 41V${i % 4 === 0 ? 45 : 43}`} />
        ))}
      </g>
      <g fontSize="10.500" fill="#767676" textAnchor="middle">
        <text x="12" y="57">dB</text>
        {labels.map((n) => (
          <text key={n} x={1622 + n * 26.88} y="57">
            {n}
          </text>
        ))}
      </g>
    </WaveSvg>
  );
};

const HOLD = ["#d01818", "#e08020", "#f0ee20", "#80d820", "#52b044", "#20d0e8", "#3a90e0", "#e020c8"];
const MENUS = ["File", "Edit", "Multitrack", "Clip", "Effects", "Favorites", "View", "Window", "Help"];

function App() {
  return (
    <Page>
      <GlobalStyle />
      <TitleBar>
        <Logo>Au</Logo>
        Adobe Audition
        <WindowButtons>
          <WindowButton>
            <svg width="10" height="10" viewBox="0 0 10 10" stroke="#222"><path d="M0 5.500H10" /></svg>
          </WindowButton>
          <WindowButton>
            <svg width="10" height="12" viewBox="0 0 10 12" fill="none" stroke="#222"><path d="M.5 3.500H7.500V11.500H.5ZM2.500 3.500V.5H9.500V8.500H7.500" /></svg>
          </WindowButton>
          <WindowButton>
            <svg width="11" height="11" viewBox="0 0 11 11" stroke="#222"><path d="M.5 .5L10.500 10.500M10.500 .5L.5 10.500" /></svg>
          </WindowButton>
        </WindowButtons>
      </TitleBar>
      <MenuBar>
        {MENUS.map((m) => (
          <span key={m}>{m}</span>
        ))}
      </MenuBar>
      <Toolbar>
        <ModeSwitch>
          <ModeButton $active>
            <WaveGlyph color={BLUE} />
            Waveform
          </ModeButton>
          <ModeButton>
            <MultiGlyph />
            Multitrack
          </ModeButton>
        </ModeSwitch>
        <ToolbarIcons />
        <ToolSep $ml={177} />
        <InvertPill>Invert</InvertPill>
        <ToolSep $ml={583} />
        <WorkspaceLink $ml={22}>Default</WorkspaceLink>
        <WorkspaceLink $ml={44}>Edit Audio to Video</WorkspaceLink>
        <WorkspaceLink $ml={43}>Radio Production</WorkspaceLink>
        <WorkspaceLink $ml={40}>
          <svg width="10" height="9" viewBox="0 0 10 9" fill="none" stroke="#a0a0a0" strokeWidth="1.600"><path d="M1 1L4 4.500L1 8M6 1L9 4.500L6 8" /></svg>
        </WorkspaceLink>
        <SearchBox>
          <SearchGlyph />
          Search Help
        </SearchBox>
      </Toolbar>
      <ToolbarGap />
      <Workspace>
        <LeftColumn>
          <FilesPanel>
            <TabBar $pl={10}>
              <Tab $active $mr={20}>
                Files
                <Lines />
              </Tab>
              <Tab $mr={38}>Effects Rack</Tab>
              <Tab>Favorites</Tab>
            </TabBar>
            <FileTools>
              <FileToolIcons />
              <FileSearch>
                <SearchGlyph caret />
              </FileSearch>
            </FileTools>
            <HeaderRow>
              <NameHead>
                Name
                <svg width="8" height="9" viewBox="0 0 8 9" fill="#8a8a8a"><path d="M4 0L8 4H5.500V9H2.500V4H0Z" /></svg>
              </NameHead>
              <div>Status</div>
              <div>Duration</div>
              <div>Sample Rate</div>
              <div>Channels</div>
              <div>Bi</div>
            </HeaderRow>
            <FileList>
              <FileRow>
                <FileName>
                  <ChevronRight size={10} color="#a0a0a0" />
                  <FileGlyph width="15" height="9" viewBox="0 0 15 9" stroke="#c0c0c0">
                    <path d="M0 4.500H15M3.500 1V8M7.500 0V9M11.500 1V8" />
                  </FileGlyph>
                  07 - Th...ntal Traveler.flac
                </FileName>
                <div />
                <DurationCell>4:03.500</DurationCell>
                <SampleCell>192000 Hz</SampleCell>
                <ChannelCell>2</ChannelCell>
                <ChannelCell>3</ChannelCell>
              </FileRow>
              <ScrollThumb />
            </FileList>
            <Transport>
              <svg width="11" height="11" viewBox="0 0 11 11" fill="#4e4e4e"><path d="M0 0L11 5.500L0 11Z" /></svg>
              <svg width="15" height="13" viewBox="0 0 15 13" fill="none" stroke="#b0b0b0" strokeWidth="1.500"><path d="M1 5V12H14V5M5 7C5 4 7 3 10 3M10 .5L13 3L10 5.500" /></svg>
              <svg width="21" height="14" viewBox="0 0 21 14">
                <path d="M0 0L4 2L0 4Z" fill="#a0a0a0" />
                <path d="M5 5H8L13 1V13L8 9H5Z" fill="#a8a8a8" />
                <path d="M15 4C17 6 17 8 15 10M17 3C19.500 6 19.500 8 17 11" fill="none" stroke="#a0a0a0" />
              </svg>
            </Transport>
          </FilesPanel>
          <FreqPanel>
            <TabBar $pl={9}>
              <Tab $active $tall $mr={22}>
                Frequency Analysis
                <Lines />
              </Tab>
              <Tab $tall>Markers</Tab>
            </TabBar>
            <ScaleRow>
              <FieldLabel>Scale:</FieldLabel>
              <Select $w={95}>
                Linear
                <ChevronDown size={12} color="#b0b0b0" />
              </Select>
              <ToolButton $ml={11}>
                <svg width="15" height="15" viewBox="0 0 15 15" fill="none" stroke="#a0a0a0">
                  <rect x=".5" y=".5" width="10" height="10" />
                  <path d="M12.500 3V14.500H3" strokeDasharray="1 1" />
                </svg>
              </ToolButton>
              <FieldLabel $ml={11}>Hold:</FieldLabel>
              <HoldGroup>
                {HOLD.map((c, i) => (
                  <HoldSlot key={c}>
                    <HoldButton>{i + 1}</HoldButton>
                    <HoldColor $c={c} />
                  </HoldSlot>
                ))}
              </HoldGroup>
            </ScaleRow>
            <ChartFrame>
              <FrequencyChart />
            </ChartFrame>
            <DisplayRow>
              <FieldLabel>Display:</FieldLabel>
              <Select $w={72}>
                Area
                <ChevronDown size={12} color="#b0b0b0" />
              </Select>
              <FieldLabel $ml={14}>Top Channel:</FieldLabel>
              <Select $w={115}>
                Average
                <ChevronDown size={12} color="#b0b0b0" />
              </Select>
              <ScanButton>Scan Selection</ScanButton>
            </DisplayRow>
            <AdvancedRow>
              <ChevronRight size={12} color={BLUE} strokeWidth={2.5} />
              Advanced
            </AdvancedRow>
          </FreqPanel>
        </LeftColumn>
        <EditorPanel>
          <TabBar $pl={3}>
            <Tab $active $mr={22}>
              Editor: 07 - The Mental Traveler.flac
              <Lines />
            </Tab>
            <Tab>Mixer</Tab>
          </TabBar>
          <OverviewRow>
            <OverviewFrame>
              <Overview />
            </OverviewFrame>
            <OverviewTools>
              <svg width="20" height="20" viewBox="0 0 20 20" fill="none" stroke="#3e3e3e" strokeWidth="1.500">
                <circle cx="10" cy="10" r="4.500" />
                <path d="M10 0V3M7.500 2.500L10 0L12.500 2.500M3 15L5.500 13M14.500 13L17 15M1 10H3M17 10H19" />
              </svg>
              <svg width="14" height="14" viewBox="0 0 14 14" fill="none" stroke="#a0a0a0">
                <rect x=".5" y=".5" width="13" height="13" />
                <path d="M.5 4.500H13.500M.5 7.500H13.500M.5 10.500H13.500" />
              </svg>
            </OverviewTools>
          </OverviewRow>
          <TrackGrid>
            <Ruler />
            <RulerTools>
              <MagnetButton>
                <svg width="12" height="13" viewBox="0 0 12 13" fill="none" stroke="#3a8fe6" strokeWidth="2.600">
                  <path d="M2 12V6A4 4 0 0 1 10 6V12" />
                </svg>
              </MagnetButton>
              <svg width="8" height="17" viewBox="0 0 8 17" fill="#9a9a9a">
                <path d="M0 0H8V6L5 8V17H3V8L0 6Z" />
              </svg>
            </RulerTools>
            <WaveCell>
              <WaveView />
              <FadeGlyph side="left" />
              <FadeGlyph side="right" />
            </WaveCell>
            <AxisCell>
              <DbAxis />
              <ChannelBadge $top={28}>1</ChannelBadge>
              <ChannelBadge $top={100}>2</ChannelBadge>
            </AxisCell>
            <SplitStrip>:::::::::::</SplitStrip>
            <StripEnd>
              <svg width="7" height="4" viewBox="0 0 7 4" fill="#888"><path d="M0 0H7L3.500 4Z" /></svg>
            </StripEnd>
            <SpecPane>
              <Spectrogram channel={0} />
              <Handle />
              <Handle $right />
            </SpecPane>
            <SpecAxis>
              <HzAxis />
            </SpecAxis>
            <SpecPane>
              <Spectrogram channel={1} />
              <Handle />
              <Handle $right />
            </SpecPane>
            <SpecAxis>
              <HzAxis />
            </SpecAxis>
          </TrackGrid>
        </EditorPanel>
      </Workspace>
      <BottomRow>
        <LevelsPanel>
          <PanelHead $pl={13}>
            Levels
            <Lines />
          </PanelHead>
          <LevelsMeter />
        </LevelsPanel>
        <SelectionPanel>
          <PanelHead $pl={14}>
            Selection/View
            <Lines />
          </PanelHead>
          <SelectionTable>
            <div />
            <SelHead>Start</SelHead>
            <SelHead>End</SelHead>
            <SelHead>Duration</SelHead>
            <div>Selection</div>
            <SelValue>0:00.000</SelValue>
            <SelValue>4:03.500</SelValue>
            <SelValue>4:03.500</SelValue>
            <div>View</div>
            <SelValue>0:00.000</SelValue>
            <SelValue>4:03.500</SelValue>
            <SelValue>4:03.500</SelValue>
          </SelectionTable>
        </SelectionPanel>
      </BottomRow>
      <StatusBar>
        Frequency Analysis completed in 25,67 seconds
        <StatusCells>
          <StatusCell $w={203}>192000 Hz ● 32-bit (float) ● 2 Channel</StatusCell>
          <StatusCell $w={72}>356,69 MB</StatusCell>
          <StatusCell $w={63}>4:03.500</StatusCell>
          <StatusCell $w={82}>48,24 GB free</StatusCell>
        </StatusCells>
      </StatusBar>
    </Page>
  );
}

export default App;
